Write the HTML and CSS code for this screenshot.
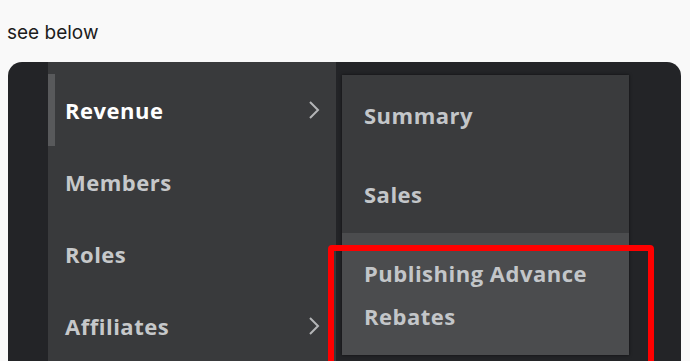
FILE: index.html
```html
<!DOCTYPE html>
<html>
<head>
    <title>see below</title>
    <link rel="stylesheet" href="styles.css">
</head>
<body>
    <p class="post_text">see below</p>

    <div class="shot">
        <div class="shot_strip"></div>

        <!-- main nav -->
        <ul class="side_nav">
            <li class="nav_item nav_item_active">
                <span>Revenue</span>
                <svg class="chevron" viewBox="0 0 12 20" width="12" height="20"><path d="M2 2 L10 10 L2 18" /></svg>
            </li>
            <li class="nav_item"><span>Members</span></li>
            <li class="nav_item"><span>Roles</span></li>
            <li class="nav_item">
                <span>Affiliates</span>
                <svg class="chevron" viewBox="0 0 12 20" width="12" height="20"><path d="M2 2 L10 10 L2 18" /></svg>
            </li>
        </ul>

        <!-- flyout for Revenue -->
        <div class="sub_menu">
            <div class="sub_top">
                <div class="sub_item sub_item_tall">Summary</div>
                <div class="sub_item sub_item_tall">Sales</div>
            </div>
            <div class="sub_bottom">
                <div class="sub_item">Publishing Advance</div>
                <div class="sub_item">Rebates</div>
            </div>
        </div>

        <div class="mark_box"></div>
    </div>
</body>
</html>
```
FILE: styles.css
```css
body {
	margin: 0;
	background-color: #f9f9f9;
	font-family: Inter, "Liberation Sans", sans-serif;
	overflow: hidden;
}

.post_text {
	margin: 0;
	padding: 21px 0 0 7px;
	height: 62px;
	box-sizing: border-box;
	font-size: 19px;
	color: #1c1c1c;
	line-height: 24px;
}

.shot {
	position: relative;
	display: flex;
	margin-left: 8px;
	width: 673px;
	height: 300px;
	background-color: #232427;
	border-radius: 14px 14px 0 0;
	overflow: hidden;
	font-family: "Open Sans", "Liberation Sans", sans-serif;
	font-weight: 700;
	letter-spacing: 0.5px;
}

.shot_strip {
	width: 40px;
	flex: none;
}

.side_nav {
	list-style: none;
	margin: 0;
	padding: 12px 0 0 0;
	width: 288px;
	flex: none;
	background-color: #393a3c;
}

.nav_item {
	display: flex;
	align-items: center;
	justify-content: space-between;
	height: 72px;
	padding: 0 16px 0 17px;
	border-left: 7px solid transparent;
	box-sizing: border-box;
	font-size: 22px;
	color: #c6c8ca;
}

.nav_item span {
	margin-left: -7px;
}

.nav_item_active {
	border-left-color: #58595b;
	color: #ffffff;
}

.chevron {
	fill: none;
	stroke: #b4b5b7;
	stroke-width: 2;
}

.sub_menu {
	margin: 13px 0 0 6px;
	width: 287px;
	height: 280px;
	flex: none;
	display: flex;
	flex-direction: column;
	box-shadow: 0 0 3px rgba(0, 0, 0, 0.6);
	font-size: 22px;
	color: #c3c6c9;
}

.sub_top {
	background-color: #3a3b3d;
	height: 158px;
}

.sub_bottom {
	flex: 1;
	background-color: #4b4c4e;
	padding-top: 18px;
}

.sub_item {
	display: flex;
	align-items: center;
	height: 43px;
	padding-left: 22px;
}

.sub_item_tall {
	height: 79px;
}

/* red highlight drawn over the screenshot */
.mark_box {
	position: absolute;
	left: 320px;
	top: 183px;
	width: 326px;
	height: 200px;
	border: 6px solid #ff0000;
	border-radius: 4px;
	box-sizing: border-box;
}
```
